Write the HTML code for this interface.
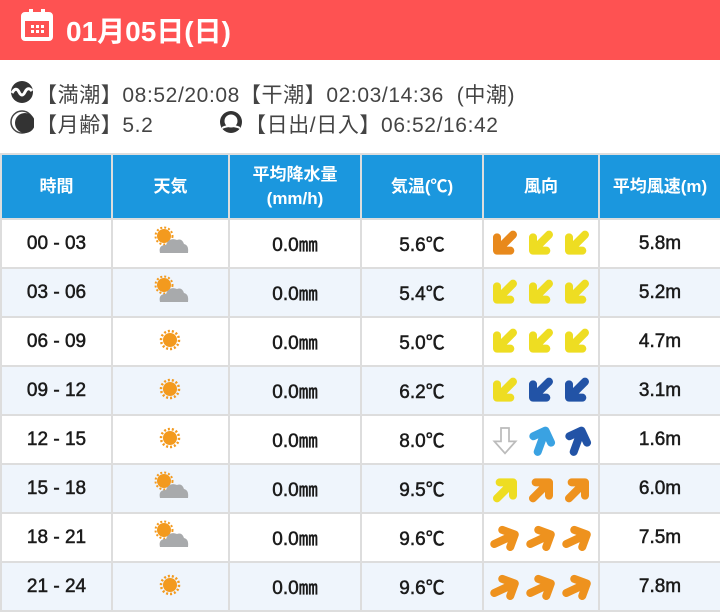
<!DOCTYPE html><html><head><meta charset="utf-8"><style>
*{margin:0;padding:0;box-sizing:border-box}
body{width:720px;height:615px;background:#fff;font-family:"Liberation Sans","Noto Sans CJK JP",sans-serif;overflow:hidden;position:relative}
.hd{position:absolute;left:0;top:0;width:720px;height:60px;background:#fe5252;color:#fff;font-size:28px;font-weight:bold}
.hd span{position:absolute;left:66px;top:10px}
.info{position:absolute;left:10px;font-size:21px;letter-spacing:0.6px;color:#444;white-space:nowrap}
table{position:absolute;left:0;top:153px;width:720px;border-collapse:collapse;table-layout:fixed}
td,th{border:2px solid #ddd;text-align:center;font-size:19px;color:#111;height:49px;padding:0}
th{background:#1b97de;color:#fff;font-weight:bold;height:65px;font-size:17px;line-height:24px;border-color:#ddd}
tr:nth-child(odd) td{background:#eff5fc}
td{font-weight:normal;color:#1a1a1a;-webkit-text-stroke:0.5px #1a1a1a}
.ar{display:inline-block;width:32px;height:32px;margin:0 2px;vertical-align:middle}
</style></head><body>
<div class="hd"><svg style="position:absolute;left:20px;top:8px" width="34" height="34" viewBox="0 0 34 34"><rect x="3" y="6" width="28" height="25" rx="2" fill="none" stroke="#fff" stroke-width="4"/><rect x="3" y="6" width="28" height="7" fill="#fff"/><rect x="9" y="1" width="4" height="7" fill="#fff"/><rect x="21" y="1" width="4" height="7" fill="#fff"/><g fill="#fff"><rect x="11" y="17" width="3" height="3"/><rect x="16" y="17" width="3" height="3"/><rect x="21" y="17" width="3" height="3"/><rect x="11" y="22" width="3" height="3"/><rect x="16" y="22" width="3" height="3"/><rect x="21" y="22" width="3" height="3"/></g></svg><span>01月05日(日)</span></div>
<svg style="position:absolute;left:10px;top:80px" width="24" height="24" viewBox="0 0 24 24"><circle cx="12" cy="12" r="11" fill="#333"/><path d="M2 13 Q6 6 9 12 T15 12 T22 11" stroke="#fff" stroke-width="3" fill="none"/></svg>
<div class="info" style="left:36px;top:79px">【満潮】08:52/20:08【干潮】02:03/14:36 &nbsp;(中潮)</div>
<svg style="position:absolute;left:10px;top:110px" width="24" height="24" viewBox="0 0 24 24"><circle cx="12" cy="12" r="11" fill="#fff" stroke="#444" stroke-width="1.5"/><circle cx="15" cy="13" r="10" fill="#333"/></svg>
<div class="info" style="left:36px;top:109px">【月齢】5.2</div>
<svg style="position:absolute;left:219px;top:110px" width="24" height="24" viewBox="0 0 24 24"><circle cx="12" cy="12" r="11" fill="#333"/><circle cx="12" cy="11" r="6.5" fill="#fff"/><path d="M3 17 Q8 14 12 16 Q16 14 21 17 L21 19 Q12 15 3 19Z" fill="#fff"/></svg>
<div class="info" style="left:245px;top:109px">【日出/日入】06:52/16:42</div>
<svg width="0" height="0" style="position:absolute"><defs>
<g id="a"><path d="M6 19 L17 8 M8 7 L18 7 L18 17" stroke-linecap="round" stroke-linejoin="round" fill="none" stroke-width="6"/></g>
<g id="cs"><circle cx="12" cy="11" r="7" fill="#f39a1e"/><circle cx="12" cy="11" r="8.5" fill="none" stroke="#f39a1e" stroke-width="2" stroke-dasharray="2 2"/><path d="M8 28 Q6 20 14 20 Q17 12 25 15 Q30 13 32 19 Q37 20 36 28Z" fill="#a8aaac"/></g>
<g id="sn"><circle cx="17" cy="17" r="7" fill="#f39a1e"/><circle cx="17" cy="17" r="9" fill="none" stroke="#f39a1e" stroke-width="2.5" stroke-dasharray="2 2"/></g>
</defs></svg>
<table>
<colgroup><col style="width:111px"><col style="width:117px"><col style="width:132px"><col style="width:122px"><col style="width:116px"><col style="width:122px"></colgroup>
<tr><th>時間</th><th>天気</th><th>平均降水量<br>(mm/h)</th><th>気温(℃)</th><th>風向</th><th>平均風速(m)</th></tr>
<tr><td>00 - 03</td><td><svg width="38" height="32" viewBox="0 0 38 32"><use href="#cs"/></svg></td><td>0.0㎜</td><td>5.6℃</td><td>
<svg class="ar" viewBox="0 0 24 24"><g transform="rotate(180 12 12)" stroke="#e8891c"><use href="#a"/></g></svg><svg class="ar" viewBox="0 0 24 24"><g transform="rotate(180 12 12)" stroke="#eedd22"><use href="#a"/></g></svg><svg class="ar" viewBox="0 0 24 24"><g transform="rotate(180 12 12)" stroke="#eedd22"><use href="#a"/></g></svg></td><td>5.8m</td></tr>
<tr><td>03 - 06</td><td><svg width="38" height="32" viewBox="0 0 38 32"><use href="#cs"/></svg></td><td>0.0㎜</td><td>5.4℃</td><td>
<svg class="ar" viewBox="0 0 24 24"><g transform="rotate(180 12 12)" stroke="#eedd22"><use href="#a"/></g></svg><svg class="ar" viewBox="0 0 24 24"><g transform="rotate(180 12 12)" stroke="#eedd22"><use href="#a"/></g></svg><svg class="ar" viewBox="0 0 24 24"><g transform="rotate(180 12 12)" stroke="#eedd22"><use href="#a"/></g></svg></td><td>5.2m</td></tr>
<tr><td>06 - 09</td><td><svg width="36" height="32" viewBox="0 0 36 32"><use href="#sn"/></svg></td><td>0.0㎜</td><td>5.0℃</td><td>
<svg class="ar" viewBox="0 0 24 24"><g transform="rotate(180 12 12)" stroke="#eedd22"><use href="#a"/></g></svg><svg class="ar" viewBox="0 0 24 24"><g transform="rotate(180 12 12)" stroke="#eedd22"><use href="#a"/></g></svg><svg class="ar" viewBox="0 0 24 24"><g transform="rotate(180 12 12)" stroke="#eedd22"><use href="#a"/></g></svg></td><td>4.7m</td></tr>
<tr><td>09 - 12</td><td><svg width="36" height="32" viewBox="0 0 36 32"><use href="#sn"/></svg></td><td>0.0㎜</td><td>6.2℃</td><td>
<svg class="ar" viewBox="0 0 24 24"><g transform="rotate(180 12 12)" stroke="#eedd22"><use href="#a"/></g></svg><svg class="ar" viewBox="0 0 24 24"><g transform="rotate(180 12 12)" stroke="#2253a6"><use href="#a"/></g></svg><svg class="ar" viewBox="0 0 24 24"><g transform="rotate(180 12 12)" stroke="#2253a6"><use href="#a"/></g></svg></td><td>3.1m</td></tr>
<tr><td>12 - 15</td><td><svg width="36" height="32" viewBox="0 0 36 32"><use href="#sn"/></svg></td><td>0.0㎜</td><td>8.0℃</td><td>
<svg class="ar" viewBox="0 0 24 24"><path d="M9 3 L15 3 L15 13 L20 13 L12 22 L4 13 L9 13Z" fill="#fff" stroke="#bbb" stroke-width="1.3"/></svg><svg class="ar" viewBox="0 0 24 24"><g transform="rotate(-25 12 12)" stroke="#3aa2e2"><use href="#a"/></g></svg><svg class="ar" viewBox="0 0 24 24"><g transform="rotate(-25 12 12)" stroke="#2253a6"><use href="#a"/></g></svg></td><td>1.6m</td></tr>
<tr><td>15 - 18</td><td><svg width="38" height="32" viewBox="0 0 38 32"><use href="#cs"/></svg></td><td>0.0㎜</td><td>9.5℃</td><td>
<svg class="ar" viewBox="0 0 24 24"><g stroke="#eedd22"><use href="#a"/></g></svg><svg class="ar" viewBox="0 0 24 24"><g stroke="#ee921e"><use href="#a"/></g></svg><svg class="ar" viewBox="0 0 24 24"><g stroke="#ee921e"><use href="#a"/></g></svg></td><td>6.0m</td></tr>
<tr><td>18 - 21</td><td><svg width="38" height="32" viewBox="0 0 38 32"><use href="#cs"/></svg></td><td>0.0㎜</td><td>9.6℃</td><td>
<svg class="ar" viewBox="0 0 24 24"><g transform="rotate(20 12 12)" stroke="#ee921e"><use href="#a"/></g></svg><svg class="ar" viewBox="0 0 24 24"><g transform="rotate(20 12 12)" stroke="#ee921e"><use href="#a"/></g></svg><svg class="ar" viewBox="0 0 24 24"><g transform="rotate(20 12 12)" stroke="#ee921e"><use href="#a"/></g></svg></td><td>7.5m</td></tr>
<tr><td>21 - 24</td><td><svg width="36" height="32" viewBox="0 0 36 32"><use href="#sn"/></svg></td><td>0.0㎜</td><td>9.6℃</td><td>
<svg class="ar" viewBox="0 0 24 24"><g transform="rotate(20 12 12)" stroke="#ee921e"><use href="#a"/></g></svg><svg class="ar" viewBox="0 0 24 24"><g transform="rotate(20 12 12)" stroke="#ee921e"><use href="#a"/></g></svg><svg class="ar" viewBox="0 0 24 24"><g transform="rotate(20 12 12)" stroke="#ee921e"><use href="#a"/></g></svg></td><td>7.8m</td></tr>
</table>
</body></html>
